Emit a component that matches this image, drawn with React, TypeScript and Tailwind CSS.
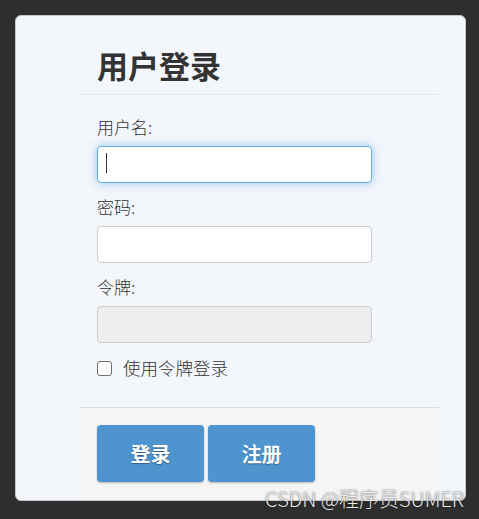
import React from "react";

const cjk = { fontFamily: '"Noto Sans CJK SC", "Noto Sans", sans-serif' };

function Field({
  label,
  type = "text",
  focused = false,
  disabled = false,
}: {
  label: string;
  type?: string;
  focused?: boolean;
  disabled?: boolean;
}) {
  return (
    <div className="flex flex-col">
      <label className="text-[17px] font-light leading-[24px] text-[#333]">{label}</label>
      <div className="relative mt-[7px] w-[275px]">
        <input
          type={type}
          disabled={disabled}
          className={
            "block h-[37px] w-[275px] rounded-[4px] border px-3 text-[17px] outline-none " +
            (focused
              ? "border-[#66afe9] bg-white shadow-[0_0_8px_rgba(102,175,233,0.7)]"
              : disabled
              ? "border-[#ccc] bg-[#eeeeee]"
              : "border-[#ccc] bg-white")
          }
        />
        {/* fake caret for the focused field */}
        {focused && (
          <span className="absolute left-[9px] top-[7px] h-[20px] w-px bg-[#333]" />
        )}
      </div>
    </div>
  );
}

export default function App() {
  return (
    <div className="relative h-[519px] w-[479px] bg-[#2e2e2e] pl-[15px] pt-[15px]" style={cjk}>
      <div className="flex h-[486px] w-[451px] flex-col overflow-hidden rounded-[6px] border border-[#c8c8c8] bg-[#f3f6fb]">
        <div className="ml-[63px] flex w-[360px] flex-1 flex-col">
          {/* Header */}
          <div className="border-b border-[#e3e7ee] px-[18px] pb-[11px] pt-[30px]">
            <h1 className="text-[31px] font-bold leading-[37px] text-[#333]">用户登录</h1>
          </div>

          {/* Body */}
          <div className="flex flex-col gap-[12px] px-[18px] pt-[20px]">
            <Field label="用户名:" focused />
            <Field label="密码:" type="password" />
            <Field label="令牌:" disabled />
            <label className="mt-[1px] flex items-center gap-[11px] text-[17.5px] font-light leading-[24px] text-[#333]">
              <input
                type="checkbox"
                className="m-0 h-[15px] w-[15px] appearance-none rounded-[3px] border border-[#6f6f6f] bg-white"
              />
              使用令牌登录
            </label>
          </div>

          {/* Footer */}
          <div className="mt-auto flex gap-[4px] border-t border-[#dcdcdc] bg-[#f5f5f5] px-[18px] pb-[18px] pt-[17px]">
            <button className="h-[57px] w-[107px] rounded-[4px] bg-[#4e94cf] text-[20px] font-bold text-white shadow-[0_1px_2px_rgba(0,0,0,0.25)] [text-shadow:0_1px_1px_rgba(0,0,0,0.35)]">
              登录
            </button>
            <button className="h-[57px] w-[107px] rounded-[4px] bg-[#4e94cf] text-[20px] font-bold text-white shadow-[0_1px_2px_rgba(0,0,0,0.25)] [text-shadow:0_1px_1px_rgba(0,0,0,0.35)]">
              注册
            </button>
          </div>
        </div>
      </div>

      {/* watermark */}
      <div className="absolute right-[15px] top-[486px] text-[20px] font-light leading-[26px] text-[#ececec] [text-shadow:0_0_2px_rgba(0,0,0,0.8)]">
        CSDN @程序员SUMER
      </div>
    </div>
  );
}
